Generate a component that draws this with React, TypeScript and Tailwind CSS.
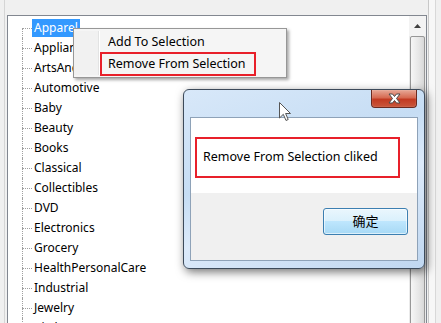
import React from 'react';

const categories = [
  'Apparel',
  'Appliances',
  'ArtsAndCrafts',
  'Automotive',
  'Baby',
  'Beauty',
  'Books',
  'Classical',
  'Collectibles',
  'DVD',
  'Electronics',
  'Grocery',
  'HealthPersonalCare',
  'Industrial',
  'Jewelry',
  'Kitchen',
];

function TreeRow({ label, first, selected }: { label: string; first?: boolean; selected?: boolean }) {
  return (
    <div className="flex h-[20px] shrink-0">
      <div className="w-[14px] shrink-0" />
      <div className="flex w-[10px] shrink-0 flex-col">
        <div className={first ? 'h-[10px]' : 'h-[10px] border-l border-dotted border-[#a0a0a0]'} />
        <div className="flex-1 border-l border-t border-dotted border-[#a0a0a0]" />
      </div>
      <div className="flex items-center">
        <span
          className={
            selected
              ? 'h-[18px] bg-[#3399ff] px-[2px] leading-[18px] text-white'
              : 'h-[18px] px-[2px] leading-[18px] text-black'
          }
        >
          {label}
        </span>
      </div>
    </div>
  );
}

function Scrollbar() {
  return (
    <div className="flex w-[17px] shrink-0 flex-col bg-[#eaeaea]">
      <div className="flex h-[20px] items-center justify-center bg-[#f3f3f3]">
        <svg width="7" height="4" viewBox="0 0 7 4">
          <path d="M3.5 0 L7 4 L0 4 Z" fill="#404040" />
        </svg>
      </div>
      <div className="mx-[1px] flex-1 rounded-[2px] border border-[#979797] bg-[linear-gradient(to_right,#f6f6f6,#e6e6e6_60%,#d8d8d8)]" />
    </div>
  );
}

function ContextMenu() {
  return (
    <div className="absolute left-[73px] top-[28px] flex h-[50px] w-[214px] border border-[#979797] bg-[#f5f5f5] py-[2px] shadow-[2px_2px_3px_rgba(0,0,0,0.35)]">
      <div className="flex w-[26px] shrink-0 justify-end bg-[#f1f1f1]">
        <div className="w-[1px] bg-[#e2e3e3]" />
        <div className="w-[1px] bg-white" />
      </div>
      <div className="flex flex-1 flex-col text-[12.5px] text-black">
        <div className="flex h-[22px] items-center pl-[8px]">Add To Selection</div>
        <div className="flex h-[22px] items-center">
          <span className="-my-[1px] flex h-[24px] w-[156px] items-center border-2 border-[#e8202a] pl-[6px]">
            Remove From Selection
          </span>
        </div>
      </div>
    </div>
  );
}

function CloseButton() {
  return (
    <div className="absolute left-[187px] top-0 flex h-[18px] w-[46px] items-center justify-center rounded-b-[4px] border border-t-0 border-[#6b2a20] bg-[linear-gradient(to_bottom,#e7a897,#d66a52_45%,#c23a22_55%,#c9573c)] shadow-[inset_0_0_1px_rgba(255,255,255,0.7)]">
      <svg width="13" height="11" viewBox="0 0 13 11">
        <path
          d="M1 1 H4.5 L6.5 3.5 L8.5 1 H12 L8.5 5.5 L12 10 H8.5 L6.5 7.5 L4.5 10 H1 L4.5 5.5 Z"
          fill="#ffffff"
          stroke="#4a4a4a"
          strokeWidth="1"
          strokeLinejoin="round"
        />
      </svg>
    </div>
  );
}

function MessageDialog() {
  return (
    <div className="absolute left-[183px] top-[89px] flex h-[180px] w-[242px] flex-col rounded-[6px] border border-[#3c4a5a] bg-[linear-gradient(160deg,#d8e8f9,#c6ddf4_40%,#dceafa_60%,#c0d7f0)] px-[6px] pb-[7px] pt-[27px] shadow-[2px_3px_10px_rgba(0,0,0,0.55)]">
      <CloseButton />
      <div className="flex flex-1 flex-col border border-[#8ea2b8] bg-white">
        <div className="flex h-[75px] flex-col px-[4px] pt-[19px]">
          <div className="flex h-[41px] w-[205px] items-center border-2 border-[#e8202a] pl-[6px] text-[12.5px] text-black">
            Remove From Selection cliked
          </div>
        </div>
        <div className="flex flex-1 justify-end bg-[#f0f0f0] pr-[9px] pt-[15px]">
          <button className="flex h-[27px] w-[85px] items-center justify-center rounded-[3px] border border-[#3c7fb1] bg-[linear-gradient(to_bottom,#eaf6fd,#d9f0fc_50%,#bee6fd_50%,#a7d9f5)] text-[13px] text-black shadow-[inset_0_0_0_1px_rgba(255,255,255,0.6)]">
            确定
          </button>
        </div>
      </div>
    </div>
  );
}

function Cursor() {
  return (
    <svg className="absolute left-[279px] top-[102px]" width="13" height="20" viewBox="0 0 13 20">
      <path
        d="M0.5 0.5 L0.5 16 L4.3 12.3 L7 18.5 L9.2 17.5 L6.6 11.5 L11.5 11.5 Z"
        fill="#ffffff"
        stroke="#555555"
        strokeWidth="1"
        strokeLinejoin="round"
      />
    </svg>
  );
}

export default function App() {
  return (
    <div className="relative h-[323px] w-[441px] overflow-hidden bg-[#f0f0f0] font-['Noto_Sans','Noto_Sans_CJK_SC',sans-serif] text-[12px]">
      <div className="flex h-full">
        <div className="w-[4px] shrink-0" />
        <div className="w-[1px] shrink-0 bg-[#d5d5d5]" />
        <div className="w-[2px] shrink-0" />
        <div className="flex flex-1 flex-col">
          <div className="h-[15px] shrink-0" />
          <div className="flex flex-1 border-l border-r border-t border-[#828790] bg-white">
            <div className="flex flex-1 flex-col overflow-hidden pt-[2px]">
              {categories.map((c, i) => (
                <TreeRow key={c} label={c} first={i === 0} selected={i === 0} />
              ))}
            </div>
            <Scrollbar />
          </div>
        </div>
        <div className="w-[1px] shrink-0" />
        <div className="w-[1px] shrink-0 bg-[#c8c8c8]" />
        <div className="w-[6px] shrink-0 bg-[#f7f7f7]" />
        <div className="w-[1px] shrink-0 bg-[#d8d8d8]" />
        <div className="w-[5px] shrink-0" />
      </div>

      <ContextMenu />
      <MessageDialog />
      <Cursor />
    </div>
  );
}
